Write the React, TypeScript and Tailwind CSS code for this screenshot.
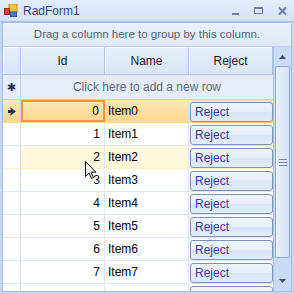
const rows = [0, 1, 2, 3, 4, 5, 6, 7];

const font = "font-['Liberation_Sans',Arial,sans-serif]";

const RejectButton = () => (
  <div className="h-[20px] w-[83px] mt-[2px] ml-[1px] rounded-[3px] border border-[#7f93b8] bg-[linear-gradient(#eef4fc_0%,#e6eefa_50%,#d8e5f6_51%,#e2ecf8_100%)] flex items-center pl-[4px] text-[12px] text-[#3b3b9c] leading-none">
    Reject
  </div>
);

const RowIndicator = ({ current }: { current: boolean }) => (
  <div
    className={`w-[18px] shrink-0 border-r border-[#c9d8ee] flex items-center justify-center ${
      current ? "bg-[linear-gradient(#fde9b4,#fbd68e)]" : "bg-white"
    }`}
  >
    {current && (
      <svg width="8" height="9" viewBox="0 0 8 9">
        <path d="M2 0 L8 4.5 L2 9 L3.5 4.5 Z M0 3 L3 3 L3.5 4.5 L3 6 L0 6 Z" fill="#1f3364" />
      </svg>
    )}
  </div>
);

const GridRow = ({ n, partial }: { n: number; partial?: boolean }) => {
  const current = n === 0;
  const hover = n === 2;
  const rowBg = current
    ? "bg-[linear-gradient(#fde9b4,#fbd68e)] border-[#f9d98f]"
    : hover
      ? "bg-[#fff8dd] border-[#fcefc2]"
      : "bg-white border-[#dbe6f5]";
  return (
    <div className={`flex h-[23px] shrink-0 border-b ${rowBg}`}>
      <RowIndicator current={current} />
      <div
        className={`w-[84px] shrink-0 flex items-center justify-end pr-[4px] text-[12px] text-black ${
          current ? "border-2 border-[#f4953c]" : "border-r border-[#dbe6f5]"
        }`}
      >
        {partial ? "" : n}
      </div>
      <div className="w-[84px] shrink-0 flex items-center pl-[3px] text-[12px] text-black border-r border-[#dbe6f5]">
        {partial ? "" : `Item${n}`}
      </div>
      <div className="w-[84px] shrink-0">
        {partial ? (
          <div className="h-[20px] w-[83px] mt-[2px] ml-[1px] rounded-[3px] border border-[#7f93b8] bg-[#eef4fc]" />
        ) : (
          <RejectButton />
        )}
      </div>
    </div>
  );
};

const HeaderCell = ({ label, w }: { label: string; w: string }) => (
  <div
    className={`${w} shrink-0 h-full border-r border-[#a9c2e6] shadow-[inset_1px_1px_0_#ffffff] bg-[linear-gradient(#e7eff9,#d9e6f6)] flex items-center justify-center text-[12px] text-[#1c1c1c]`}
  >
    {label}
  </div>
);

const ScrollBar = () => (
  <div className="w-[18px] shrink-0 flex flex-col bg-[#cadcf4] border-l border-[#a9c2e6]">
    <div className="h-[19px] flex items-center justify-center">
      <svg width="7" height="4" viewBox="0 0 7 4">
        <path d="M0 4 L3.5 0 L7 4 Z" fill="#3d4f6d" />
      </svg>
    </div>
    <div className="mx-[1px] h-[192px] rounded-[2px] border border-[#8ea8cf] bg-[linear-gradient(90deg,#e8f0fb,#d4e3f7)] flex items-center justify-center">
      <div className="flex flex-col gap-[2px]">
        <div className="w-[8px] h-px bg-[#7189b3]" />
        <div className="w-[8px] h-px bg-[#7189b3]" />
        <div className="w-[8px] h-px bg-[#7189b3]" />
      </div>
    </div>
    <div className="flex-1 flex items-end justify-center pb-[8px]">
      <svg width="7" height="4" viewBox="0 0 7 4">
        <path d="M0 0 L7 0 L3.5 4 Z" fill="#3d4f6d" />
      </svg>
    </div>
  </div>
);

const Cursor = () => (
  <svg
    className="absolute left-[85px] top-[161px]"
    width="12"
    height="19"
    viewBox="0 0 12 19"
  >
    <path
      d="M0.5 0.5 L0.5 15.5 L4 12 L6.5 17.5 L8.5 16.5 L6 11.2 L10.8 11.2 Z"
      fill="#ffffff"
      stroke="#000000"
      strokeWidth="1"
    />
  </svg>
);

export default function App() {
  return (
    <div
      className={`${font} relative w-[294px] h-[294px] overflow-hidden bg-[#c4d8f2] flex flex-col select-none`}
    >
      {/* title bar */}
      <div className="h-[22px] shrink-0 flex items-center pl-[4px] bg-[linear-gradient(#e3edfa,#d3e2f6)] border-b border-[#a6c0e6]">
        <svg width="14" height="13" viewBox="0 0 14 13">
          <rect x="5" y="0" width="8" height="8" fill="#f7c531" stroke="#c5891a" />
          <rect x="0.5" y="4.5" width="5" height="6" fill="#d9412a" stroke="#9c2a1a" />
          <rect x="6.5" y="8" width="6" height="4.5" fill="#4b7fd6" stroke="#2d5aa8" />
        </svg>
        <span className="ml-[5px] text-[12px] text-[#3d3d8f] leading-none">RadForm1</span>
        <div className="ml-auto flex items-center h-full">
          <div className="w-[23px] flex justify-center">
            <div className="mt-[7px] w-[7px] h-[2px] bg-[#6b7fa3]" />
          </div>
          <div className="w-[23px] flex justify-center">
            <div className="w-[9px] h-[7px] border border-t-2 border-[#6b7fa3]" />
          </div>
          <div className="w-[24px] flex justify-center">
            <svg width="9" height="8" viewBox="0 0 9 8">
              <path d="M1 0.5 L8 7.5 M8 0.5 L1 7.5" stroke="#6b7fa3" strokeWidth="2" />
            </svg>
          </div>
        </div>
      </div>

      {/* window body */}
      <div className="flex-1 min-h-0 px-[2px] pb-[2px]">
        <div className="h-full border border-[#a3bde3] flex flex-col bg-white">
          {/* group panel */}
          <div className="h-[24px] shrink-0 flex items-center justify-center bg-[linear-gradient(#eaf1fb,#dfe9f7)] text-[11.5px] text-[#556379] border-b border-[#b9cfee]">
            Drag a column here to group by this column.
          </div>

          <div className="flex-1 min-h-0 flex">
            <div className="flex-1 min-w-0 flex flex-col overflow-hidden">
              {/* header */}
              <div className="h-[28px] shrink-0 flex border-b border-[#a9c2e6]">
                <HeaderCell label="" w="w-[18px]" />
                <HeaderCell label="Id" w="w-[84px]" />
                <HeaderCell label="Name" w="w-[84px]" />
                <HeaderCell label="Reject" w="w-[84px]" />
              </div>
              {/* new row */}
              <div className="h-[25px] shrink-0 flex bg-[#e4edf9] border-b border-[#c3d5ee]">
                <div className="w-[18px] shrink-0 border-r border-[#c3d5ee] flex items-center justify-center text-[11px] text-[#1f2d4a]">
                  ✱
                </div>
                <div className="flex-1 flex items-center justify-center text-[12px] text-[#5f6b80]">
                  Click here to add a new row
                </div>
              </div>
              {rows.map((n) => (
                <GridRow key={n} n={n} />
              ))}
              <GridRow n={8} partial />
            </div>
            <ScrollBar />
          </div>
        </div>
      </div>

      <Cursor />
    </div>
  );
}
